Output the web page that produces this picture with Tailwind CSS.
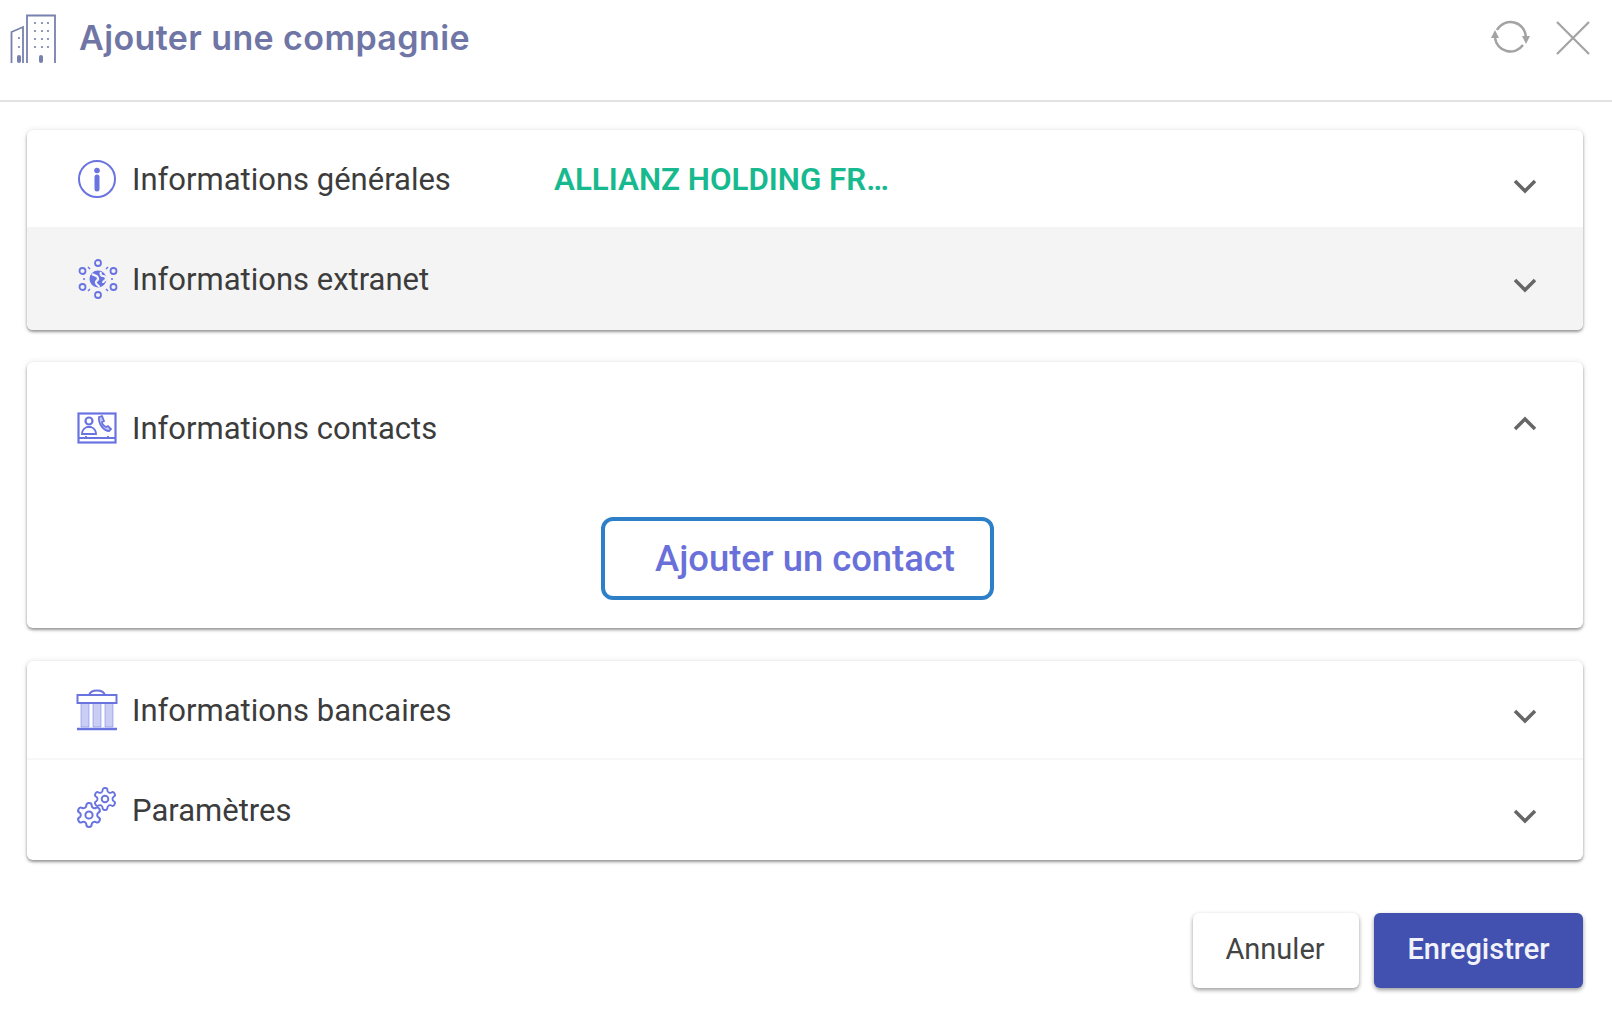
<!DOCTYPE html>
<html lang="fr">
  <head>
    <meta charset="UTF-8" />
    <title>Ajouter une compagnie</title>
    <script src="https://cdn.jsdelivr.net/npm/@tailwindcss/browser@4"></script>
  </head>
  <body class="bg-white font-['Roboto',sans-serif] overflow-hidden">
    <div class="h-[1019px] w-[1612px]">
      <!-- header -->
      <header class="h-[102px] flex items-start border-b-2 border-[#e2e2e2] pl-[10px] pr-[22px]">
        <svg class="mt-[14px] w-[48px] h-[50px]" viewBox="0 0 48 50" fill="none" stroke="#7880ad" stroke-width="1.800">
          <path d="M17 49V1.500H45V49" />
          <path d="M1.500 49V18L13 13V49" />
          <path d="M25 9h0M32 9h0M38 9h0M25 17h0M32 17h0M38 17h0M25 25h0M32 25h0M38 25h0M25 33h0M32 33h0M38 33h0M9 24h0M9 33h0" stroke-width="2.200" stroke-linecap="round" />
          <rect x="29" y="41" width="4" height="8" rx="2" fill="#7880ad" stroke="none" />
          <rect x="7" y="41" width="4" height="8" rx="2" fill="#7880ad" stroke="none" />
        </svg>
        <h1 class="ml-[21px] mt-[15px] font-['Inter',sans-serif] font-semibold text-[34px] tracking-[0.4px] leading-[46px] text-[#6f76a6]">Ajouter une compagnie</h1>
        <div class="ml-auto flex items-center gap-[24px] mt-[19px]">
          <svg class="w-[42px] h-[38px]" viewBox="0 0 42 38" fill="none" stroke="#a3a3a3" stroke-width="2.500">
            <path d="M7 11A15.500 15.500 0 0 1 36 18" />
            <path d="M5 19A15.500 15.500 0 0 0 33 26" />
            <path d="M32 17h8l-4 8zM1 19h8l-4-8z" fill="#a3a3a3" stroke="none" />
          </svg>
          <svg class="w-[34px] h-[34px]" viewBox="0 0 34 34" fill="none" stroke="#a3a3a3" stroke-width="2.200">
            <path d="M1 1l32 32M33 1L1 33" />
          </svg>
        </div>
      </header>

      <main class="px-[27px] pr-[29px] pt-[28px]">
        <!-- general + extranet -->
        <section class="h-[200px] rounded-md bg-white overflow-hidden shadow-[0_2px_3px_rgba(0,0,0,0.38),0_0_6px_rgba(0,0,0,0.1)]">
          <div class="h-[97px] flex items-center pl-[50px] pr-[46px]">
            <svg class="w-[40px] h-[40px]" viewBox="0 0 40 40" fill="none" stroke="#6a74e0" stroke-width="2">
              <circle cx="20" cy="20" r="18" />
              <circle cx="20" cy="11.500" r="2.800" fill="#6a74e0" stroke="none" />
              <path d="M20 18v12" stroke-width="5" stroke-linecap="round" />
            </svg>
            <span class="ml-[15px] w-[422px] pt-[2px] text-[31px] leading-9 text-[#3c3c3c]">Informations générales</span>
            <span class="pt-[2px] text-[31.300px] leading-9 font-semibold text-[#17b98e]">ALLIANZ HOLDING FR…</span>
            <svg class="ml-auto mt-[14px] w-[24px] h-[16px]" viewBox="0 0 24 16" fill="none" stroke="#666" stroke-width="3.500"><path d="M2 3l10 10L22 3" /></svg>
          </div>
          <div class="h-[103px] flex items-center bg-[#f4f4f4] pl-[50px] pr-[46px]">
            <svg class="w-[40px] h-[40px] ml-[1px]" viewBox="0 0 40 40" fill="none" stroke="#6a74e0" stroke-width="1.800">
              <circle cx="20" cy="20" r="8.500" fill="#6a74e0" stroke="none" />
              <path d="M14 15c3 2 5 1 6 4s-3 2-2 5 3 2 3 4M23 13c-1 2 0 4 2 4s3 1 3 3-3 1-3 4" stroke="#f4f4f4" stroke-width="2.200" />
              <circle cx="20" cy="4" r="3" />
              <circle cx="20" cy="36" r="3" />
              <circle cx="4.500" cy="12" r="3" />
              <circle cx="35.500" cy="12" r="3" />
              <circle cx="4.500" cy="28" r="3" />
              <circle cx="35.500" cy="28" r="3" />
              <path d="M10 8l2 2M30 8l-2 2M10 32l2-2M30 32l-2-2M5 20h2M33 20h2" stroke-width="1.500" />
            </svg>
            <span class="ml-[14px] pt-[2px] text-[31px] leading-9 text-[#3c3c3c]">Informations extranet</span>
            <svg class="ml-auto mt-[12px] w-[24px] h-[16px]" viewBox="0 0 24 16" fill="none" stroke="#666" stroke-width="3.500"><path d="M2 3l10 10L22 3" /></svg>
          </div>
        </section>

        <!-- contacts -->
        <section class="mt-[32px] h-[266px] rounded-md bg-white shadow-[0_2px_3px_rgba(0,0,0,0.38),0_0_6px_rgba(0,0,0,0.1)]">
          <div class="h-[132px] flex items-center pl-[50px] pr-[46px]">
            <svg class="w-[40px] h-[32px]" viewBox="0 0 40 32" fill="none" stroke="#6a74e0" stroke-width="2.200">
              <rect x="1.500" y="1.500" width="37" height="29" />
              <circle cx="12" cy="9" r="3.500" />
              <path d="M5 22c0-5 3-6 5-7h4c2 1 5 2 5 7zM1.500 26h37M9 26v-2M31 26v-2" stroke-width="1.800" />
              <path d="M22 5l3-1 2 5-2 1c0 2 2 4 4 5l2-1 3 3-2 2c-5 0-11-7-10-14z" fill="#6a74e0" fill-opacity="0.4" stroke-width="1.800" />
            </svg>
            <span class="ml-[15px] pt-[2px] text-[31px] leading-9 text-[#3c3c3c]">Informations contacts</span>
            <svg class="ml-auto -mt-[8px] w-[24px] h-[16px]" viewBox="0 0 24 16" fill="none" stroke="#666" stroke-width="3.500"><path d="M2 13L12 3l10 10" /></svg>
          </div>
          <div class="pt-[23px] pl-[574px]">
            <button class="h-[83px] w-[393px] rounded-[12px] border-[4px] border-[#2d80c8] pl-[50px] pt-[2px] text-left text-[36.400px] font-medium text-[#6a70da]">Ajouter un contact</button>
          </div>
        </section>

        <!-- bank + settings -->
        <section class="mt-[33px] h-[199px] rounded-md bg-white overflow-hidden shadow-[0_2px_3px_rgba(0,0,0,0.38),0_0_6px_rgba(0,0,0,0.1)]">
          <div class="h-[99px] flex items-center border-b-2 border-[#f7f7f7] pl-[50px] pr-[46px]">
            <svg class="w-[42px] h-[42px] -ml-[1px]" viewBox="0 0 42 42" fill="none" stroke="#6a74e0" stroke-width="2">
              <path d="M1.500 14V6h39v8zM13 6c2-6 14-6 16 0" />
              <path d="M5 14h8v24H5zM17 14h8v24h-8zM29 14h8v24h-8z" fill="#6a74e0" fill-opacity="0.35" stroke-opacity="0.5" stroke-width="1" />
              <path d="M1 40h40" stroke-width="2.500" />
            </svg>
            <span class="ml-[14px] pt-[2px] text-[31px] leading-9 text-[#3c3c3c]">Informations bancaires</span>
            <svg class="ml-auto mt-[12px] w-[24px] h-[16px]" viewBox="0 0 24 16" fill="none" stroke="#666" stroke-width="3.500"><path d="M2 3l10 10L22 3" /></svg>
          </div>
          <div class="h-[100px] flex items-center pl-[50px] pr-[46px]">
            <svg class="w-[40px] h-[40px] overflow-visible" viewBox="0 0 40 40" fill="none" stroke="#6a74e0" stroke-width="1.700">
              <g transform="translate(14.800 -4.200) scale(1.100)">
                <path d="M12.220 2h-.44a2 2 0 0 0-2 2v.18a2 2 0 0 1-1 1.730l-.43.25a2 2 0 0 1-2 0l-.15-.08a2 2 0 0 0-2.730.73l-.22.38a2 2 0 0 0 .73 2.730l.15.1a2 2 0 0 1 1 1.720v.51a2 2 0 0 1-1 1.740l-.15.09a2 2 0 0 0-.73 2.730l.22.38a2 2 0 0 0 2.730.73l.15-.08a2 2 0 0 1 2 0l.43.25a2 2 0 0 1 1 1.730V20a2 2 0 0 0 2 2h.44a2 2 0 0 0 2-2v-.18a2 2 0 0 1 1-1.730l.43-.25a2 2 0 0 1 2 0l.15.08a2 2 0 0 0 2.730-.73l.22-.39a2 2 0 0 0-.73-2.730l-.15-.08a2 2 0 0 1-1-1.740v-.5a2 2 0 0 1 1-1.740l.15-.09a2 2 0 0 0 .73-2.730l-.22-.38a2 2 0 0 0-2.730-.73l-.15.08a2 2 0 0 1-2 0l-.43-.25a2 2 0 0 1-1-1.730V4a2 2 0 0 0-2-2z" />
                <circle cx="12" cy="12" r="3" />
              </g>
              <g transform="translate(-2.400 10.600) scale(1.200)">
                <path d="M12.220 2h-.44a2 2 0 0 0-2 2v.18a2 2 0 0 1-1 1.730l-.43.25a2 2 0 0 1-2 0l-.15-.08a2 2 0 0 0-2.730.73l-.22.38a2 2 0 0 0 .73 2.730l.15.1a2 2 0 0 1 1 1.720v.51a2 2 0 0 1-1 1.740l-.15.09a2 2 0 0 0-.73 2.730l.22.38a2 2 0 0 0 2.730.73l.15-.08a2 2 0 0 1 2 0l.43.25a2 2 0 0 1 1 1.730V20a2 2 0 0 0 2 2h.44a2 2 0 0 0 2-2v-.18a2 2 0 0 1 1-1.730l.43-.25a2 2 0 0 1 2 0l.15.08a2 2 0 0 0 2.730-.73l.22-.39a2 2 0 0 0-.73-2.730l-.15-.08a2 2 0 0 1-1-1.740v-.5a2 2 0 0 1 1-1.740l.15-.09a2 2 0 0 0 .73-2.730l-.22-.38a2 2 0 0 0-2.730-.73l-.15.08a2 2 0 0 1-2 0l-.43-.25a2 2 0 0 1-1-1.730V4a2 2 0 0 0-2-2z" />
                <circle cx="12" cy="12" r="3" />
              </g>
            </svg>
            <span class="ml-[15px] pt-[2px] text-[31px] leading-9 text-[#3c3c3c]">Paramètres</span>
            <svg class="ml-auto mt-[11px] w-[24px] h-[16px]" viewBox="0 0 24 16" fill="none" stroke="#666" stroke-width="3.500"><path d="M2 3l10 10L22 3" /></svg>
          </div>
        </section>

        <!-- actions -->
        <div class="mt-[53px] flex justify-end gap-[15px]">
          <button class="h-[75px] w-[166px] rounded-md bg-white pb-[2px] pr-[2px] text-[29px] text-[#444] shadow-[0_2px_4px_rgba(0,0,0,0.4)]">Annuler</button>
          <button class="h-[75px] w-[209px] rounded-md bg-[#4251b0] pb-[2px] text-[29px] font-medium text-[#f2f3fa] shadow-[0_2px_4px_rgba(0,0,0,0.4)]">Enregistrer</button>
        </div>
      </main>
    </div>
  </body>
</html>
